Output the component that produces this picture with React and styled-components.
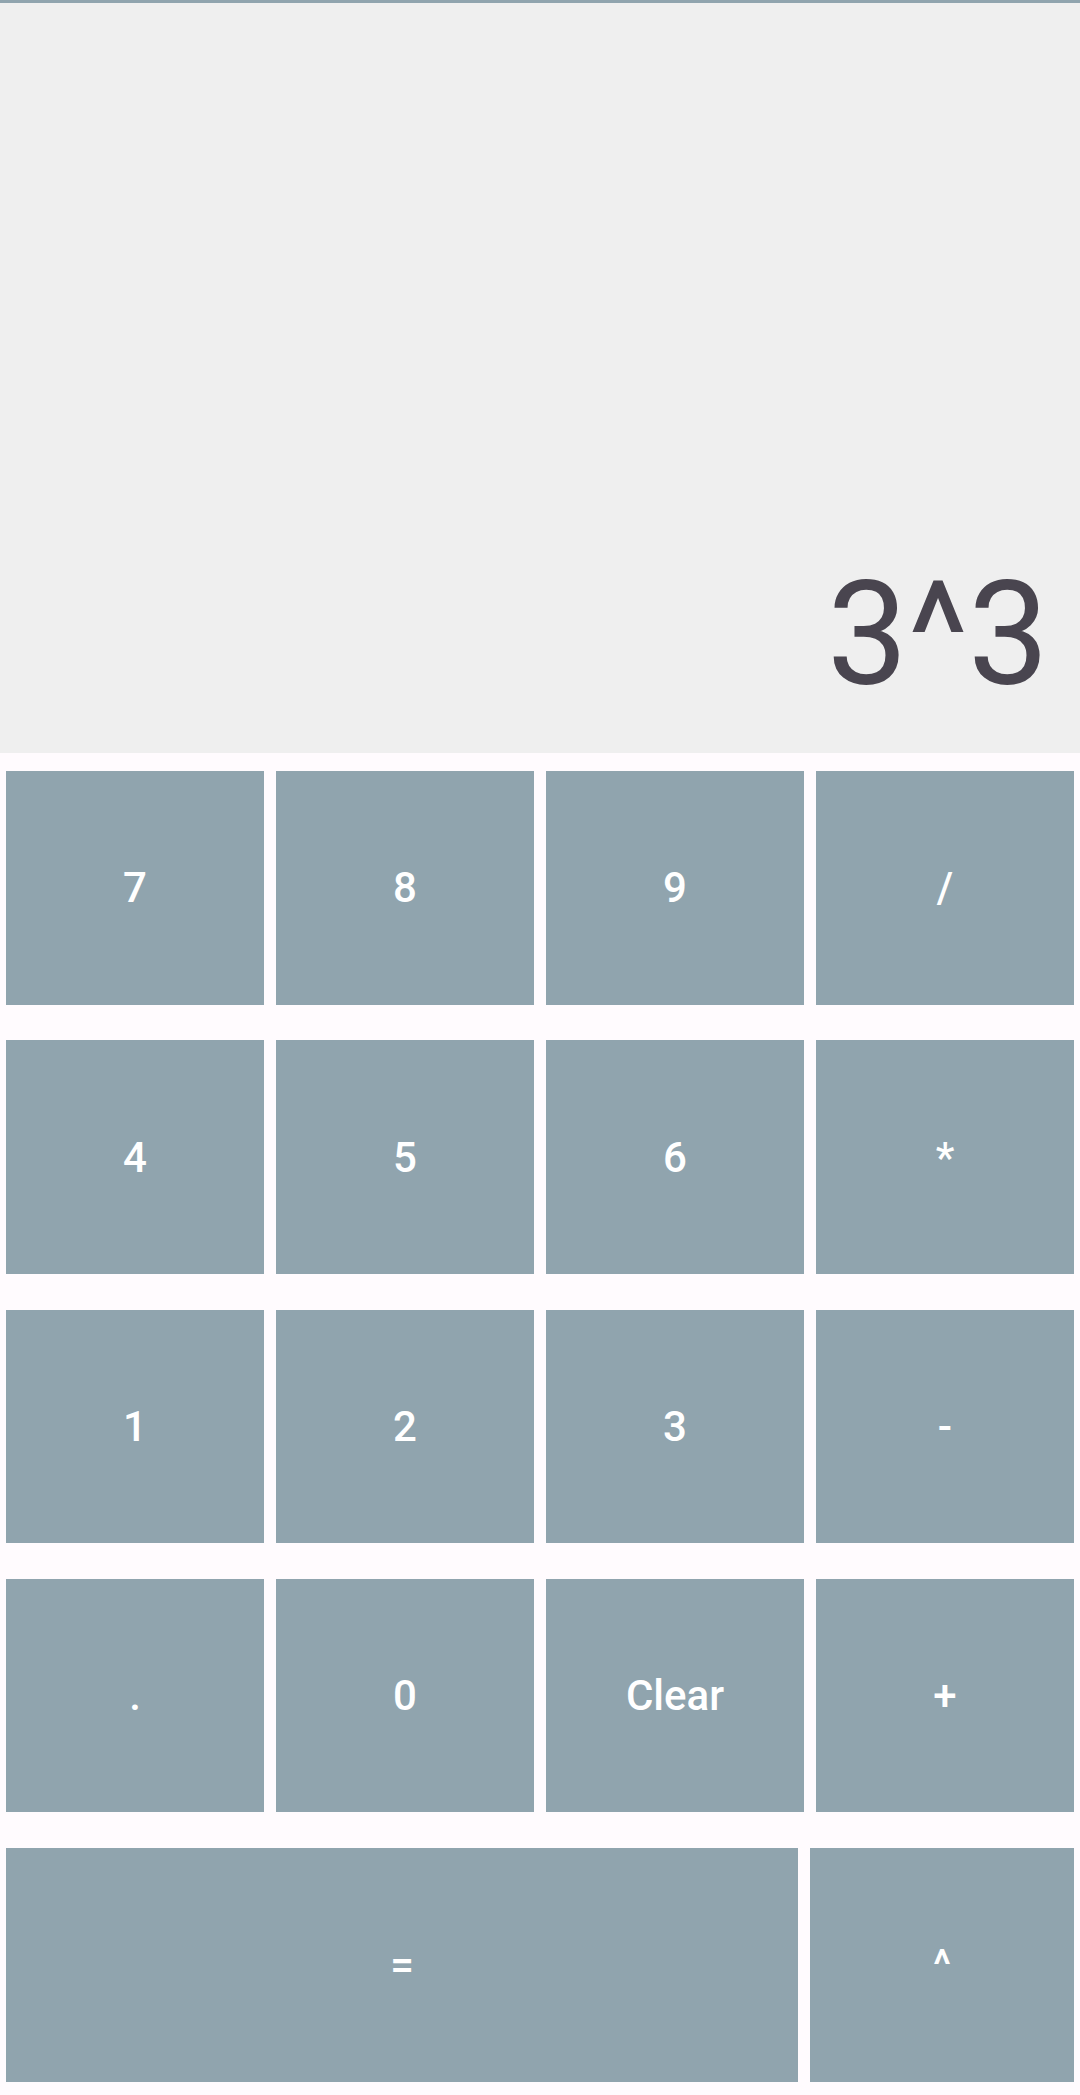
import React from "react";
import styled, { createGlobalStyle } from "styled-components";

const rows = [
    ["7", "8", "9", "/"],
    ["4", "5", "6", "*"],
    ["1", "2", "3", "-"],
    [".", "0", "Clear", "+"],
];

function App() {
    return (
        <>
            <GlobalStyle />
            <Calculator>
                <Display>
                    <Expression>3^3</Expression>
                </Display>
                <Keypad>
                    {rows.map((row, i) => (
                        <KeyRow key={i}>
                            {row.map((label) => (
                                <Key key={label}>{label}</Key>
                            ))}
                        </KeyRow>
                    ))}
                    <KeyRow>
                        <Key $grow={3}>=</Key>
                        <Key $grow={1}>^</Key>
                    </KeyRow>
                </Keypad>
            </Calculator>
        </>
    );
}

export default App;

const GlobalStyle = createGlobalStyle`
    html, body {
        margin: 0;
        padding: 0;
        background-color: #fffbfe;
        font-family: Roboto, "Noto Sans", sans-serif;
    }
`;

const Calculator = styled.div`
    width: 1080px;
    min-height: 2095px;
    display: flex;
    flex-direction: column;
    background-color: #fffbfe;
`;

const Display = styled.div`
    height: 753px;
    box-sizing: border-box;
    border-top: 3px solid #90a4ae;
    background-color: #efefef;
    display: flex;
    align-items: flex-end;
    justify-content: flex-end;
    padding: 0 31px 34px;
`;

const Expression = styled.div`
    font-size: 144px;
    font-weight: 400;
    color: #49454f;
    line-height: normal;
`;

const Keypad = styled.div`
    display: flex;
    flex-direction: column;
    gap: 35.75px;
    padding: 18px 6px 13px;
`;

const KeyRow = styled.div`
    display: flex;
    gap: 12px;
    height: 233.5px;
`;

const Key = styled.button`
    flex: ${(p) => p.$grow || 1} 1 0;
    border: none;
    border-radius: 0;
    background-color: #90a4ae;
    color: #ffffff;
    font-family: Roboto, "Noto Sans", sans-serif;
    font-size: 42px;
    font-weight: 500;
    padding: 0;
    display: flex;
    align-items: center;
    justify-content: center;
`;
